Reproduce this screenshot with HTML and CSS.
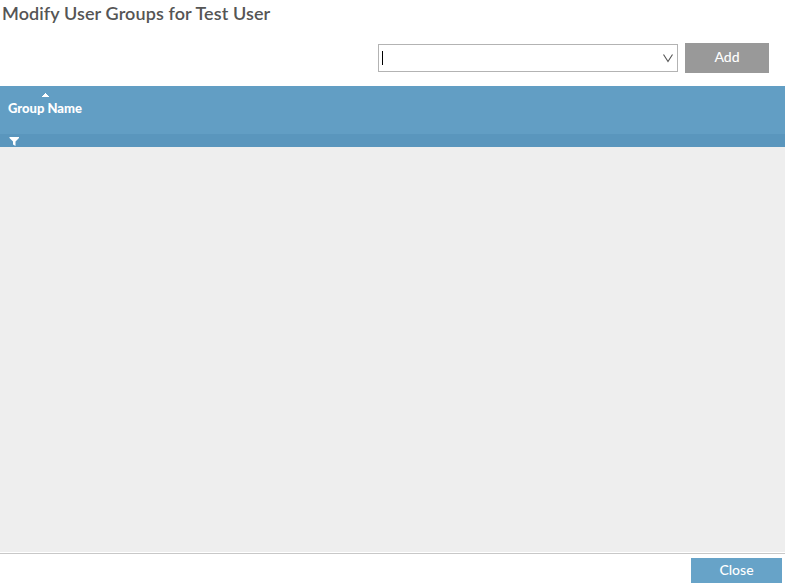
FILE: index.html
```html
<!DOCTYPE html>
<html lang="en">
<head>
<meta charset="utf-8">
<title>Modify User Groups</title>
<link rel="stylesheet" href="styles.css">
</head>
<body>
<main class="dialog">
  <h1 class="title">Modify User Groups for Test User</h1>
  <div class="toolbar">
    <div class="combo"><span class="caret"></span>
      <svg class="chevron" width="12" height="10" viewBox="0 0 12 10"><path d="M1.5 1.5 6 8.5 10.5 1.5" fill="none" stroke="#555" stroke-width="1.1"/></svg>
    </div>
    <button class="add">Add</button>
  </div>
  <section class="grid">
    <div class="head">
      <svg class="sort" width="7" height="4" viewBox="0 0 7 4" shape-rendering="crispEdges"><path d="M3 0h1v1h1v1h1v1h1v1H0V3h1V2h1V1h1z" fill="#fff"/></svg>
      <span class="column">Group Name</span>
    </div>
    <div class="filter"><svg width="10" height="9" viewBox="0 0 10 9"><path d="M.5 0H10v1L6.5 4.5V9L4 7.5v-3L.5 1z" fill="#fff"/></svg></div>
    <div class="rows"></div>
  </section>
  <footer class="footer"><button class="close">Close</button></footer>
</main>
</body>
</html>
```
FILE: styles.css
```css
* { box-sizing: border-box; }
body { margin: 0; background: #fff; font-family: Lato, sans-serif; overflow: hidden; }
.dialog { width: 785px; height: 588px; display: flex; flex-direction: column; }
.title { margin: 0; padding: 1px 0 0 2px; height: 43px; font-size: 18px; line-height: 24px; font-weight: 600; letter-spacing: .1px; color: #555; }
.toolbar { height: 43px; display: flex; justify-content: flex-end; align-items: flex-start; gap: 7px; padding-right: 16px; }
.combo { width: 300px; height: 28px; margin-top: 1px; border: 1px solid #b3b3b3; display: flex; align-items: center; justify-content: space-between; padding: 0 3px; }
.caret { width: 1px; height: 14px; background: #000; }
button { border: 0; padding: 0 0 2px; font: 500 14px/20px Lato, sans-serif; color: #fff; }
.add { width: 84px; height: 30px; background: #999; }
.head { height: 48px; background: #629ec4; padding: 7px 8px 0; display: flex; flex-direction: column; align-items: flex-start; }
.sort { margin-left: 34px; }
.column { color: #fff; font-size: 13px; font-weight: 900; line-height: 16px; margin-top: 3px; }
.filter { height: 13px; background: #5a96bd; padding: 3px 9px 0; }
.filter svg { display: block; }
.rows { height: 405px; background: #eee; }
.footer { margin-top: 1px; border-top: 1px solid #c8c8c8; padding: 4px 3px 0 0; display: flex; justify-content: flex-end; }
.close { width: 91px; height: 25px; background: #67a3c8; }
```
